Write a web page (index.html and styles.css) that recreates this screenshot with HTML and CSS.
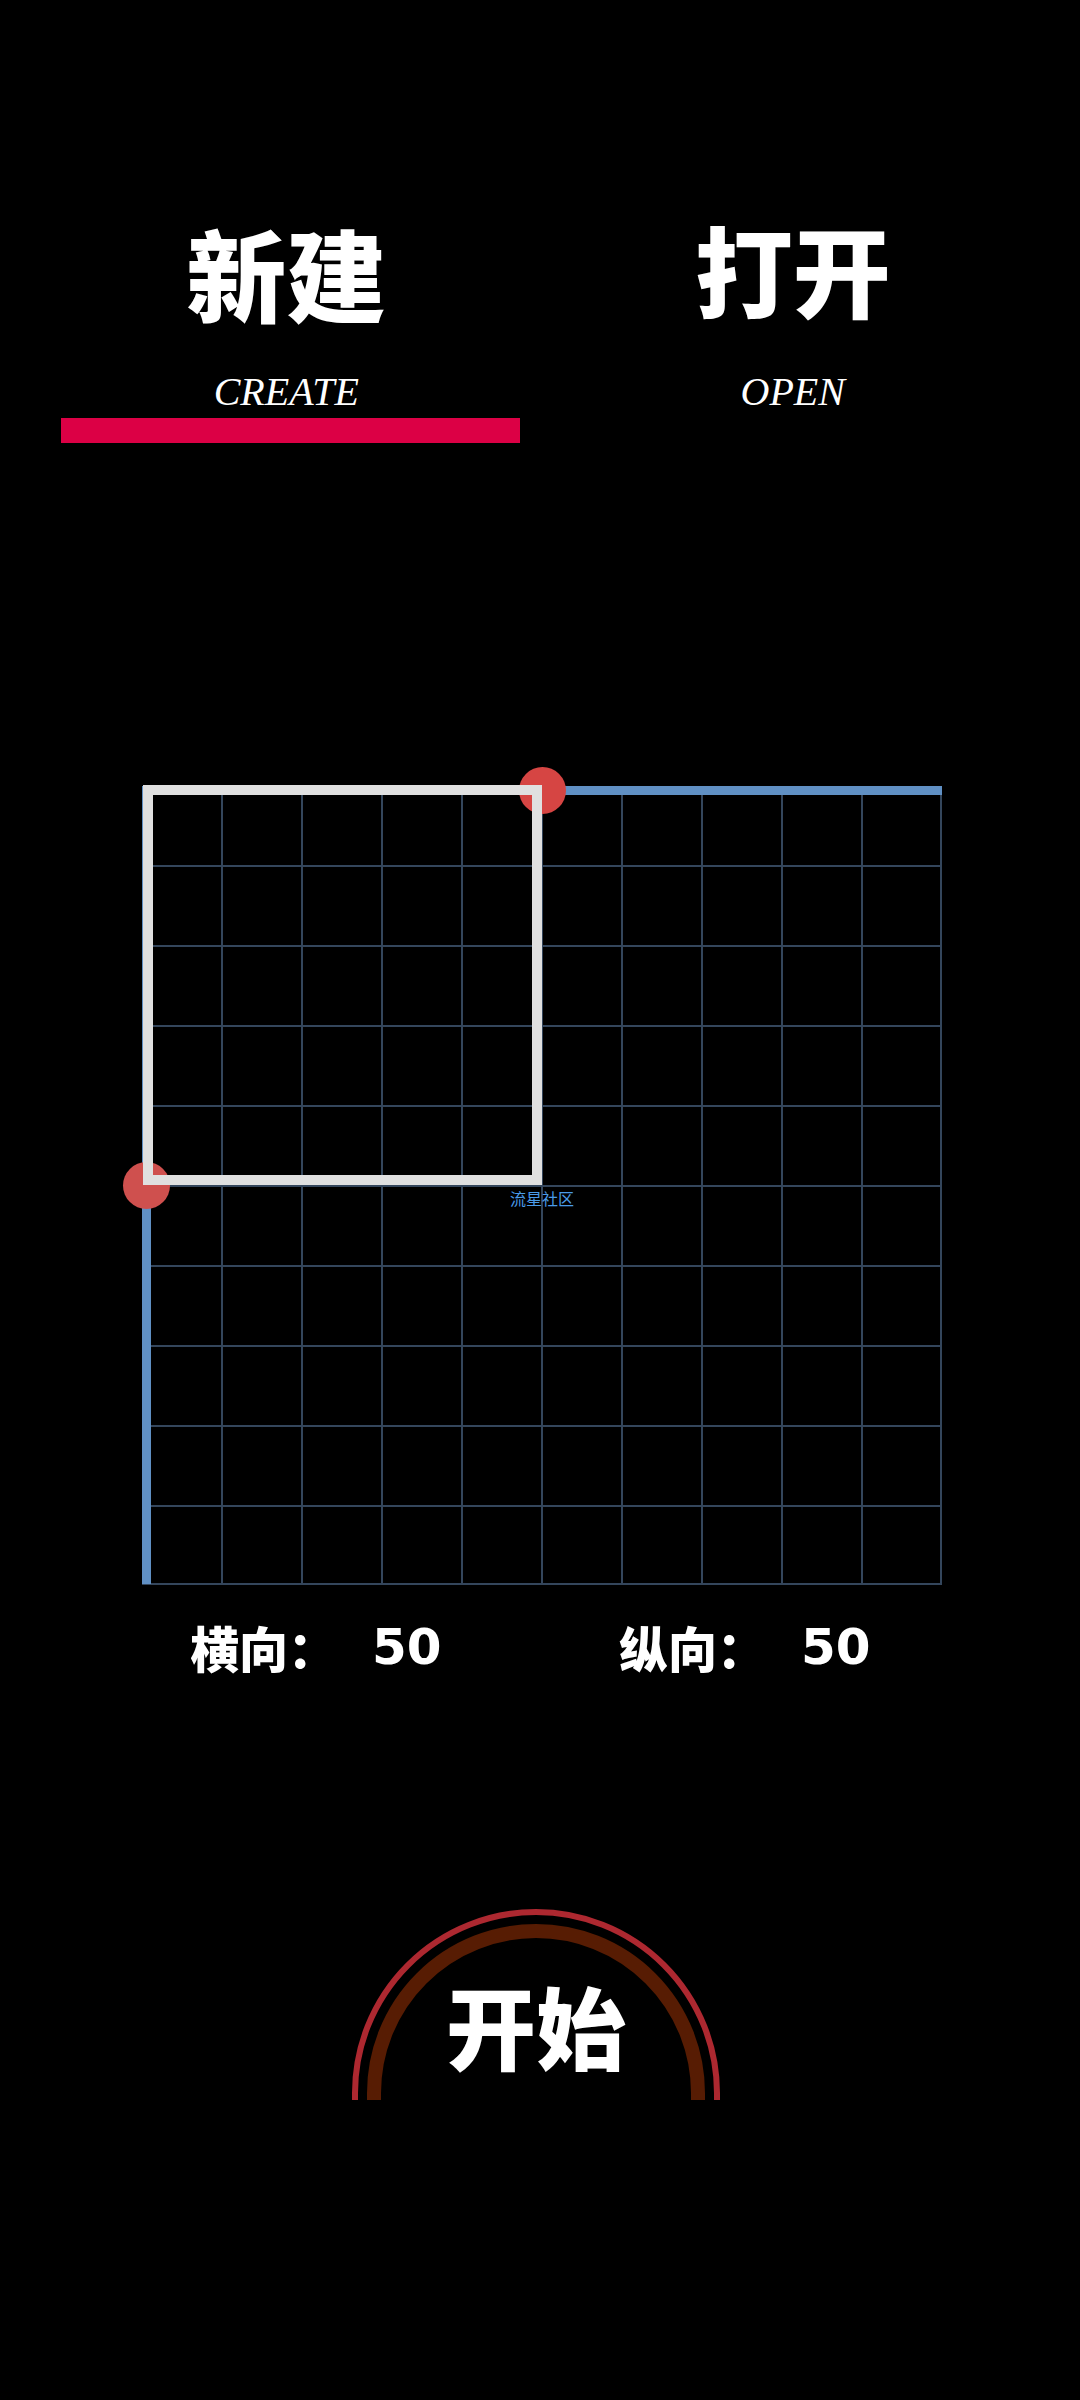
FILE: index.html
```html
<!DOCTYPE html>
<html lang="zh-CN">
<head>
<meta charset="utf-8">
<meta name="viewport" content="width=device-width, initial-scale=1">
<title>新建</title>
<link rel="stylesheet" href="styles.css">
</head>
<body>
<nav class="tabs">
  <button class="tab tab-active" type="button"><span class="tab-title">新建</span><span class="tab-sub">CREATE</span></button>
  <button class="tab" type="button"><span class="tab-title tab-title-open">打开</span><span class="tab-sub">OPEN</span></button>
</nav>
<main class="main">
  <div class="board">
    <svg class="grid" viewBox="0 0 800 800" aria-hidden="true">
      <path d="M80 0V798M160 0V798M240 0V798M320 0V798M400 0V798M480 0V798M560 0V798M640 0V798M720 0V798M799 0V798M0 80H800M0 160H800M0 240H800M0 320H800M0 400H800M0 480H800M0 560H800M0 640H800M0 720H800M0 798H800"/>
    </svg>
    <input class="slider slider-x" id="cols" type="range" min="0" max="100" value="50" aria-label="横向">
    <input class="slider slider-y" id="rows" type="range" min="0" max="100" value="50" aria-label="纵向">
    <div class="selection"></div>
    <span class="mark">流星社区</span>
  </div>
  <div class="sizes">
    <div class="size"><label for="cols">横向：</label><output class="value" for="cols">50</output></div>
    <div class="size"><label for="rows">纵向：</label><output class="value" for="rows">50</output></div>
  </div>
  <button class="start" type="button">
    <svg class="arc" viewBox="0 0 368 191" aria-hidden="true">
      <path d="M3 191V184A181 181 0 0 1 365 184V191" stroke="#ad2830" stroke-width="6"/>
      <path d="M22 191V184A162 162 0 0 1 346 184V191" stroke="#571c03" stroke-width="14"/>
    </svg>
    <span class="start-text">开始</span>
  </button>
</main>
</body>
</html>
```
FILE: styles.css
```css
* {
  box-sizing: border-box;
}

body {
  margin: 0;
  min-height: 100vh;
  background: #000;
  color: #fff;
  font-family: "Noto Sans CJK SC", sans-serif;
}

button {
  padding: 0;
  border: 0;
  background: none;
  color: inherit;
  font: inherit;
}

.tabs {
  display: grid;
  grid-template-columns: 1fr 1fr;
  gap: 44px;
  padding: 212px 58px 0 61px;
}

.tab {
  display: flex;
  flex-direction: column;
  align-items: center;
  height: 231px;
  border-bottom: 25px solid transparent;
}

.tab-active {
  padding-right: 8px;
  border-color: #dc0045;
}

.tab-title {
  height: 158px;
  font-size: 100px;
  font-weight: 900;
  line-height: 120px;
}

.tab-title-open {
  font-size: 98px;
  line-height: 110px;
}

.tab-sub {
  font-family: "Liberation Serif", serif;
  font-size: 40px;
  font-style: italic;
  line-height: 44px;
}

.main {
  display: flex;
  flex-direction: column;
  padding: 343px 138px 300px 142px;
}

.board {
  position: relative;
  aspect-ratio: 1;
}

.grid {
  display: block;
  width: 100%;
  fill: none;
  stroke: #34465c;
  stroke-width: 2;
}

.slider {
  position: absolute;
  margin: 0;
  appearance: none;
  background: linear-gradient(#6090c4, #6090c4) center no-repeat;
}

.slider-x {
  top: -19px;
  left: 0;
  width: 100%;
  height: 47px;
  background-size: 100% 9px;
}

.slider-y {
  top: 0;
  left: -19px;
  width: 47px;
  height: calc(100% - 2px);
  writing-mode: vertical-lr;
  background-size: 9px 100%;
}

.slider::-webkit-slider-thumb {
  appearance: none;
  width: 47px;
  height: 47px;
  border-radius: 50%;
  background: #d64543;
}

.slider-y::-webkit-slider-thumb {
  background: #cf504e;
}

.selection {
  position: absolute;
  top: -1px;
  left: 1px;
  width: calc(50% - 1px);
  height: 50%;
  border: 10px solid #e0e0e0;
  pointer-events: none;
}

.mark {
  position: absolute;
  top: 50%;
  left: 50%;
  color: #4a9be8;
  font-size: 16px;
  line-height: 24px;
  transform: translateX(-50%);
}

.sizes {
  display: grid;
  grid-template-columns: 1fr 1fr;
  gap: 106px;
  padding: 29px 0 0 48px;
}

.size {
  display: flex;
  align-items: center;
  gap: 35px;
  font-size: 49px;
  font-weight: 900;
  line-height: 64px;
  white-space: nowrap;
}

.value {
  font-family: "DejaVu Sans", sans-serif;
  font-size: 50px;
  font-weight: 700;
}

.start {
  display: grid;
  align-self: center;
  width: 368px;
  margin: 230px 12px 0 0;
}

.arc,
.start-text {
  grid-area: 1 / 1;
}

.arc {
  width: 100%;
  fill: none;
}

.start-text {
  padding-top: 55px;
  font-size: 90px;
  font-weight: 900;
  line-height: 120px;
}
```
